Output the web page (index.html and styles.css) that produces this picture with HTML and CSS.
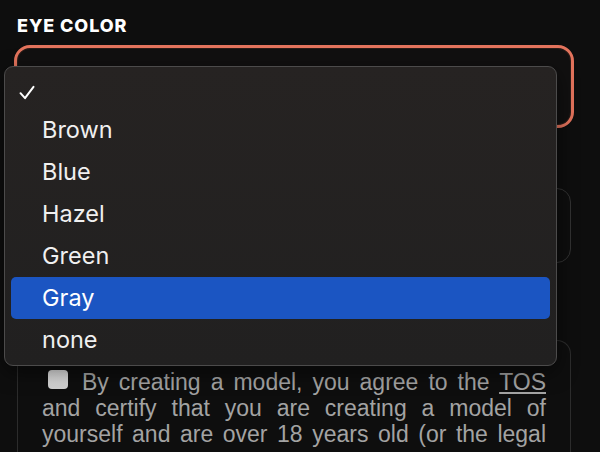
FILE: index.html
```html
<!DOCTYPE html>
<html lang="en">
<head>
  <meta charset="UTF-8" />
  <meta name="viewport" content="width=device-width, initial-scale=1.0"/>
  <title>Create Model - Eye Color</title>
  <link rel="stylesheet" href="styles.css">
</head>
<body>
  <main class="form">
    <section class="field">
      <label class="field-label">EYE COLOR</label>
      <div class="select is-focused"></div>
    </section>

    <section class="field">
      <div class="input"></div>
    </section>

    <section class="field">
      <label class="terms">
        <input type="checkbox" class="terms-check">By creating a model, you agree to the <a href="#" class="terms-link">TOS</a> and certify that you are creating a model of yourself and are over 18 years old (or the legal
      </label>
    </section>
  </main>

  <!-- native select popup, open over the form -->
  <ul class="menu">
    <li class="menu-item is-checked">
      <svg class="menu-check" width="16" height="16" viewBox="0 0 16 16">
        <path d="M1.5 8.2 L6 13.2 L14.5 1.8" fill="none" stroke="#fff" stroke-width="2" stroke-linecap="round" stroke-linejoin="round"/>
      </svg>
    </li>
    <li class="menu-item">Brown</li>
    <li class="menu-item">Blue</li>
    <li class="menu-item">Hazel</li>
    <li class="menu-item">Green</li>
    <li class="menu-item is-active">Gray</li>
    <li class="menu-item">none</li>
  </ul>
</body>
</html>
```

FILE: styles.css
```css
:root {
  --bg: #0e0e0e;
  --accent: #e3735c;
  --line: #323232;
  --menu: #232121;
  --menu-border: #4c4b4b;
  --highlight: #1b55c2;
  --muted: #a3a3a3;
}

body {
  margin: 0;
  padding: 0;
  background: var(--bg);
  color: white;
  font-family: Inter, 'Noto Sans', sans-serif;
  height: 100vh;
  overflow: hidden;
  position: relative;
}

.form {
  padding: 15px 29px 0 17px;
}

.field-label {
  display: block;
  font-size: 18px;
  font-weight: 800;
  line-height: 22px;
  letter-spacing: 0.9px;
  margin-bottom: 11px;
}

.select {
  height: 77px;
  box-sizing: border-box;
  border: 1px solid #2a1c18;
  border-radius: 13px;
  background: #111010;
}

.select.is-focused {
  outline: 3px solid var(--accent);
}

.input {
  margin-top: 63px;
  height: 75px;
  box-sizing: border-box;
  border: 1px solid var(--line);
  border-radius: 14px;
}

.field:last-child {
  margin-top: 77px;
  border: 1px solid #2c2c2c;
  border-bottom: none;
  border-radius: 14px 14px 0 0;
  padding: 28px 24px 0;
  min-height: 200px;
}

.terms {
  display: block;
  font-family: 'Liberation Sans', Arial, sans-serif;
  font-size: 23px;
  line-height: 26px;
  color: var(--muted);
  text-align: justify;
  text-align-last: justify;
}

.terms-check {
  appearance: none;
  width: 20px;
  height: 19px;
  margin: 0 14px 0 6px;
  vertical-align: 1px;
  border-radius: 4px;
  background: linear-gradient(#e2e2e2, #cfcfcf);
}

.terms-link {
  color: var(--muted);
  text-decoration: underline;
}

.menu {
  position: absolute;
  left: 4px;
  top: 66px;
  width: 553px;
  height: 300px;
  box-sizing: border-box;
  margin: 0;
  padding: 4px 6px;
  list-style: none;
  background: linear-gradient(#262322, #212020);
  border: 1px solid var(--menu-border);
  border-radius: 9px;
  box-shadow: 0 6px 20px rgba(0, 0, 0, 0.5);
}

.menu-item {
  height: 42px;
  line-height: 42px;
  padding-left: 31px;
  font-size: 23.5px;
  color: #f0f0f0;
  border-radius: 5px;
  position: relative;
}

.menu-item.is-checked {
  height: 38px;
}

.menu-check {
  position: absolute;
  left: 8px;
  top: 14px;
}

.menu-item.is-active {
  background: var(--highlight);
  color: white;
}
```
